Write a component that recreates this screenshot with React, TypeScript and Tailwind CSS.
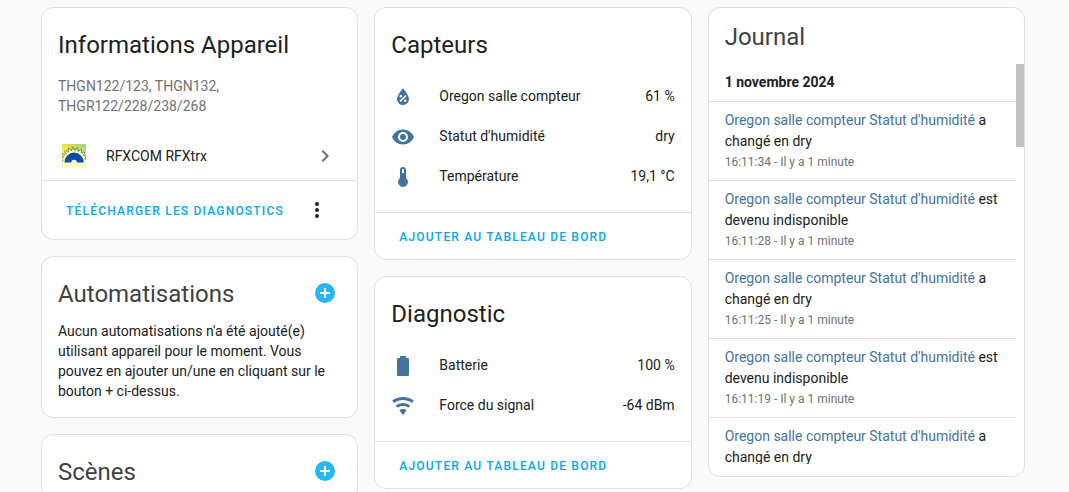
import type { ReactNode } from "react";

const ICONS = {
  humidity:
    "M12,3.25C12,3.25 6,10 6,14C6,17.32 8.69,20 12,20A6,6 0 0,0 18,14C18,10 12,3.25 12,3.25M14.47,9.97L15.53,11.03L9.53,17.03L8.47,15.97M9.75,10A1.25,1.25 0 0,1 11,11.25A1.25,1.25 0 0,1 9.75,12.5A1.25,1.25 0 0,1 8.5,11.25A1.25,1.25 0 0,1 9.75,10M14.25,14.5A1.25,1.25 0 0,1 15.5,15.75A1.25,1.25 0 0,1 14.25,17A1.25,1.25 0 0,1 13,15.75A1.25,1.25 0 0,1 14.25,14.5Z",
  eye: "M12,9A3,3 0 0,0 9,12A3,3 0 0,0 12,15A3,3 0 0,0 15,12A3,3 0 0,0 12,9M12,17A5,5 0 0,1 7,12A5,5 0 0,1 12,7A5,5 0 0,1 17,12A5,5 0 0,1 12,17M12,4.5C7,4.5 2.73,7.61 1,12C2.73,16.39 7,19.5 12,19.5C17,19.5 21.27,16.39 23,12C21.27,7.61 17,4.5 12,4.5Z",
  thermometer: "M15 13V5A3 3 0 0 0 9 5V13A5 5 0 1 0 15 13M12 4A1 1 0 0 1 13 5V8H11V5A1 1 0 0 1 12 4Z",
  battery:
    "M16.67,4H15V2H9V4H7.33A1.33,1.33 0 0,0 6,5.33V20.67C6,21.4 6.6,22 7.33,22H16.67A1.33,1.33 0 0,0 18,20.67V5.33C18,4.6 17.4,4 16.67,4Z",
  wifi: "M12,21L15.6,16.2C14.6,15.45 13.35,15 12,15C10.65,15 9.4,15.45 8.4,16.2L12,21M12,3C7.95,3 4.21,4.34 1.2,6.6L3,9C5.5,7.12 8.62,6 12,6C15.38,6 18.5,7.12 21,9L22.8,6.6C19.79,4.34 16.05,3 12,3M12,9C9.3,9 6.81,9.89 4.8,11.4L6.6,13.8C8.1,12.67 9.97,12 12,12C14.03,12 15.9,12.67 17.4,13.8L19.2,11.4C17.19,9.89 14.7,9 12,9Z",
  plus: "M17,13H13V17H11V13H7V11H11V7H13V11H17M12,2A10,10 0 0,0 2,12A10,10 0 0,0 12,22A10,10 0 0,0 22,12A10,10 0 0,0 12,2Z",
  chevron: "M8.59,16.58L13.17,12L8.59,7.41L10,6L16,12L10,18L8.59,16.58Z",
  dots: "M12,16A2,2 0 0,1 14,18A2,2 0 0,1 12,20A2,2 0 0,1 10,18A2,2 0 0,1 12,16M12,10A2,2 0 0,1 14,12A2,2 0 0,1 12,14A2,2 0 0,1 10,12A2,2 0 0,1 12,10M12,4A2,2 0 0,1 14,6A2,2 0 0,1 12,8A2,2 0 0,1 10,6A2,2 0 0,1 12,4Z",
};

type IconName = keyof typeof ICONS;

type Entity = { icon: IconName; name: string; state: string };

type Entry = { message: string; time?: string };

const sensors: Entity[] = [
  { icon: "humidity", name: "Oregon salle compteur", state: "61 %" },
  { icon: "eye", name: "Statut d'humidité", state: "dry" },
  { icon: "thermometer", name: "Température", state: "19,1 °C" },
];

const diagnostics: Entity[] = [
  { icon: "battery", name: "Batterie", state: "100 %" },
  { icon: "wifi", name: "Force du signal", state: "-64 dBm" },
];

const entries: Entry[] = [
  { message: "a changé en dry", time: "16:11:34" },
  { message: "est devenu indisponible", time: "16:11:28" },
  { message: "a changé en dry", time: "16:11:25" },
  { message: "est devenu indisponible", time: "16:11:19" },
  { message: "a changé en dry" },
];

function Icon({ name, className = "" }: { name: IconName; className?: string }) {
  return (
    <svg viewBox="0 0 24 24" fill="currentColor" className={`h-6 w-6 shrink-0 ${className}`} aria-hidden>
      <path d={ICONS[name]} />
    </svg>
  );
}

// Toothed half wheel, one tooth every 18 degrees
function gearPath() {
  const points: string[] = [];
  for (let i = 0; i < 10; i++) {
    const start = 2 + i * 18;
    for (const [offset, radius] of [
      [0, 11.4],
      [6, 11.4],
      [8, 13.8],
      [14, 13.8],
    ]) {
      const angle = ((start + offset) * Math.PI) / 180;
      points.push(`${(12 - radius * Math.cos(angle)).toFixed(2)} ${(17.4 - radius * Math.sin(angle)).toFixed(2)}`);
    }
  }
  return `M${points.join("L")}`;
}

function RfxLogo() {
  return (
    <svg viewBox="0 0 24 24" className="h-6 w-6 shrink-0" aria-hidden>
      <defs>
        <linearGradient id="rfx-top" x1="0" x2="1" y1="0" y2="0">
          <stop offset="0" stopColor="#f0ea2c" />
          <stop offset="1" stopColor="#9fd18c" />
        </linearGradient>
        <linearGradient id="rfx-fade" x1="0" x2="0" y1="0" y2="1">
          <stop offset="0.1" stopColor="#fdf8c4" stopOpacity="0" />
          <stop offset="0.7" stopColor="#fdf8c4" />
        </linearGradient>
      </defs>
      <rect width="24" height="24" fill="url(#rfx-top)" />
      <rect width="24" height="24" fill="url(#rfx-fade)" />
      <path d={gearPath()} fill="#fbf6b8" stroke="#5c6440" strokeWidth="0.8" />
      <path d="M2.5 18.5A9.6 9.9 0 0 1 21.7 18.5H14.9A2.8 2.8 0 0 0 9.3 18.5Z" fill="#0a4da6" />
    </svg>
  );
}

function Card({ children }: { children: ReactNode }) {
  return <section className="overflow-hidden rounded-xl border border-[#e0e0e0] bg-white">{children}</section>;
}

function CardTitle({ children }: { children: ReactNode }) {
  return <h2 className="px-4 pt-3 pb-1.5 text-2xl leading-[50px] font-normal">{children}</h2>;
}

function AddHeader({ title }: { title: string }) {
  return (
    <div className="flex items-start justify-between pt-3 pr-5 pb-0.5 pl-4 opacity-85">
      <h2 className="text-2xl leading-[50px] font-normal">{title}</h2>
      <button type="button" aria-label={`Ajouter : ${title}`} className="h-12 text-[#03a9f4]">
        <Icon name="plus" />
      </button>
    </div>
  );
}

function TextButton({ children }: { children: ReactNode }) {
  return (
    <button type="button" className="h-9 px-2 pt-0.5 text-xs font-medium tracking-widest text-[#03a9f4] uppercase">
      {children}
    </button>
  );
}

function EntityCard({ title, entities }: { title: string; entities: Entity[] }) {
  return (
    <Card>
      <CardTitle>{title}</CardTitle>
      <ul className="px-4 pb-4">
        {entities.map((entity) => (
          <li key={entity.name} className="flex h-10 items-center">
            <Icon name={entity.icon} className="mt-0.5 text-[#44739e]" />
            <span className="ml-6 flex-1">{entity.name}</span>
            <span>{entity.state}</span>
          </li>
        ))}
      </ul>
      <div className="border-t border-[#e0e0e0] px-4 py-[5px]">
        <TextButton>Ajouter au tableau de bord</TextButton>
      </div>
    </Card>
  );
}

function Logbook() {
  return (
    <Card>
      <h2 className="px-4 pt-1 pb-0.5 text-2xl leading-[50px] font-normal opacity-85">Journal</h2>
      <div className="mb-3 flex h-[400px] overflow-hidden">
        <div className="min-w-0 flex-1">
          <h3 className="px-4 pt-2 pb-[9px] font-bold">1 novembre 2024</h3>
          <ul>
            {entries.map((entry, i) => (
              <li key={i} className="border-t border-[#e0e0e0] px-4 py-2">
                <p className="leading-[21px]">
                  <a href="#" className="text-[#44739e]">
                    Oregon salle compteur Statut d'humidité
                  </a>{" "}
                  {entry.message}
                </p>
                {entry.time && (
                  <p className="text-xs leading-5 text-[#727272]">{entry.time} - Il y a 1 minute</p>
                )}
              </li>
            ))}
          </ul>
        </div>
        <div className="w-2 shrink-0">
          <div className="h-[83px] bg-[#c1c1c1]" />
        </div>
      </div>
    </Card>
  );
}

export default function App() {
  return (
    <main className="h-screen overflow-hidden bg-[#fafafa] pt-[7px] pr-11 pl-[41px] font-['Roboto',sans-serif] text-sm text-[#212121]">
      <div className="grid grid-cols-3 items-start gap-4">
        <div className="flex flex-col gap-4">
          <Card>
            <CardTitle>Informations Appareil</CardTitle>
            <p className="px-4 text-[#727272]">
              THGN122/123, THGN132,
              <br />
              THGR122/228/238/268
            </p>
            <a href="#" className="mt-5 mb-1 flex h-10 items-center px-5">
              <RfxLogo />
              <span className="ml-5 flex-1">RFXCOM RFXtrx</span>
              <Icon name="chevron" className="text-[#727272]" />
            </a>
            <div className="flex items-center justify-between border-t border-[#e0e0e0] px-4 py-[5px]">
              <TextButton>Télécharger les diagnostics</TextButton>
              <button type="button" aria-label="Menu" className="grid h-12 w-12 place-items-center">
                <Icon name="dots" />
              </button>
            </div>
          </Card>
          <Card>
            <AddHeader title="Automatisations" />
            <p className="px-4 pb-4">
              Aucun automatisations n'a été ajouté(e) utilisant appareil pour le moment. Vous pouvez en ajouter
              un/une en cliquant sur le bouton + ci-dessus.
            </p>
          </Card>
          <Card>
            <AddHeader title="Scènes" />
          </Card>
        </div>
        <div className="flex flex-col gap-4">
          <EntityCard title="Capteurs" entities={sensors} />
          <EntityCard title="Diagnostic" entities={diagnostics} />
        </div>
        <Logbook />
      </div>
    </main>
  );
}
